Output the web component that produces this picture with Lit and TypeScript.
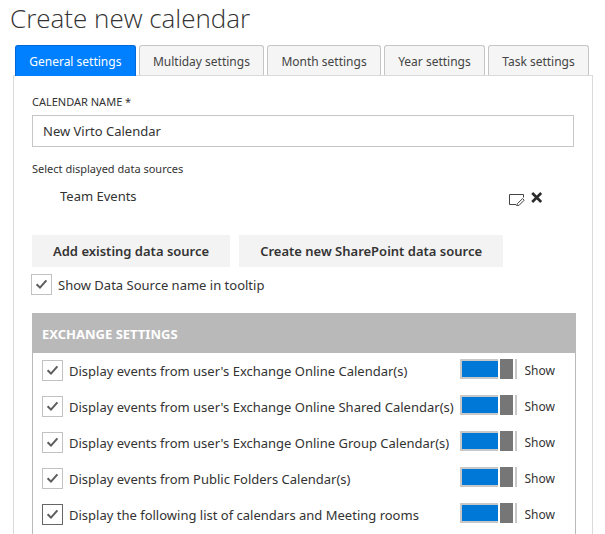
import { LitElement, html, css, svg } from "lit";
import { customElement, property, state } from "lit/decorators.js";
import { classMap } from "lit/directives/class-map.js";

@customElement("check-box")
class CheckBox extends LitElement {
  @property() label = "";
  @property({ type: Boolean }) checked = false;
  @property({ type: Boolean }) active = false;

  static styles = css`
    :host {
      display: block;
      min-width: 0;
    }
    label {
      display: flex;
      align-items: center;
      gap: 6px;
      white-space: nowrap;
    }
    .box {
      display: grid;
      flex: none;
    }
    .box > * {
      grid-area: 1 / 1;
    }
    input {
      appearance: none;
      box-sizing: border-box;
      width: 21px;
      height: 21px;
      margin: 0;
      border: 1px solid #c2c2c2;
      background: #fff;
    }
    .active {
      border-color: #666;
    }
    svg {
      pointer-events: none;
    }
  `;

  render() {
    return html`<label>
      <span class="box">
        <input
          type="checkbox"
          class=${classMap({ active: this.active })}
          .checked=${this.checked}
          @change=${(e: Event) => (this.checked = (e.target as HTMLInputElement).checked)}
        />
        ${this.checked
          ? html`<svg width="21" height="21" viewBox="0 0 21 21" aria-hidden="true">
              ${svg`<path d="M5.6 10.2 L9 13.6 L15.4 6.4" fill="none" stroke="#5c5c5c" stroke-width="2"/>`}
            </svg>`
          : null}
      </span>
      <span>${this.label}</span>
    </label>`;
  }
}

@customElement("toggle-switch")
class ToggleSwitch extends LitElement {
  static styles = css`
    label {
      display: flex;
      align-items: flex-start;
      gap: 8px;
      font-size: 12px;
      line-height: 20px;
    }
    input {
      appearance: none;
      position: relative;
      box-sizing: border-box;
      width: 57px;
      height: 20px;
      margin: 0;
      border: 2px solid #c8c8c8;
      background: #fff;
    }
    input:checked {
      background: #0078d7;
    }
    input::before {
      content: "";
      position: absolute;
      top: -2px;
      bottom: -2px;
      left: 0;
      width: 13px;
      background: #767676;
      box-shadow: -2px 0 #fff, 2px 0 #fff;
    }
    input:checked::before {
      left: auto;
      right: 2px;
    }
    span {
      padding-top: 2px;
    }
  `;

  render() {
    return html`<label><input type="checkbox" role="switch" checked /><span>Show</span></label>`;
  }
}

@customElement("app-root")
class AppRoot extends LitElement {
  @state() private tab = 0;

  private tabs = ["General settings", "Multiday settings", "Month settings", "Year settings", "Task settings"];

  private options = [
    "Display events from user's Exchange Online Calendar(s)",
    "Display events from user's Exchange Online Shared Calendar(s)",
    "Display events from user's Exchange Online Group Calendar(s)",
    "Display events from Public Folders Calendar(s)",
    "Display the following list of calendars and Meeting rooms",
  ];

  static styles = css`
    :host {
      display: flex;
      flex-direction: column;
      box-sizing: border-box;
      min-height: 100vh;
      padding: 0 12px 0 13px;
      background: #fff;
      color: #333;
      font: 13px/20px "Noto Sans", "Open Sans", sans-serif;
    }
    h1 {
      margin: 0 -3px 9px;
      font-family: "Open Sans", "Noto Sans", sans-serif;
      font-size: 26px;
      font-weight: 300;
      line-height: 36px;
      color: #333;
    }
    .tabs {
      display: flex;
      gap: 3px;
      padding: 0 4px 0 2px;
    }
    .tab {
      flex: auto;
      box-sizing: border-box;
      height: 30px;
      padding: 2px 0 0;
      border: 1px solid #c6c6c6;
      border-bottom: 0;
      border-radius: 3px 3px 0 0;
      background: #f5f5f5;
      color: #444;
      font: inherit;
      font-size: 12px;
      white-space: nowrap;
    }
    .selected {
      height: 31px;
      margin-bottom: -1px;
      z-index: 1;
      border-color: #0067d8;
      background: #007fff;
      color: #fff;
    }
    .panel {
      flex: 1;
      display: flex;
      flex-direction: column;
      padding: 16px 16px 0 18px;
      border: 1px solid #dadada;
      border-bottom: 0;
    }
    .caption {
      font-size: 11px;
    }
    .name {
      box-sizing: border-box;
      height: 32px;
      margin: 3px 2px 12px 0;
      padding: 0 10px;
      border: 1px solid #c6c6c6;
      background: #fff;
      color: #333;
      font: inherit;
    }
    .source {
      display: flex;
      align-items: center;
      justify-content: space-between;
      margin: 7px 33px 29px 28px;
    }
    .actions {
      display: flex;
      gap: 6px;
    }
    .icon {
      display: block;
      padding: 0;
      border: 0;
      background: none;
    }
    .icon svg {
      display: block;
    }
    .buttons {
      display: flex;
      gap: 9px;
      margin-bottom: 7px;
    }
    .button {
      height: 32px;
      padding: 0 21px;
      border: 0;
      background: #f3f3f3;
      color: #333;
      font: inherit;
      font-weight: 600;
      white-space: nowrap;
    }
    .tooltip {
      margin-left: -1px;
    }
    .exchange {
      flex: 1;
      margin-top: 18px;
      border: 1px solid #b9b9b9;
      border-width: 0 1px;
    }
    h2 {
      margin: 0 -1px;
      padding: 2px 10px 0;
      background: #b9b9b9;
      color: #fff;
      font-size: 13px;
      font-weight: 700;
      line-height: 38px;
    }
    .row {
      display: grid;
      grid-template-columns: 1fr auto;
      align-items: start;
      box-sizing: border-box;
      height: 36px;
      padding: 6px 20px 0 9px;
    }
    .row check-box {
      margin-top: 1px;
    }
  `;

  render() {
    return html`
      <h1>Create new calendar</h1>
      <div class="tabs" role="tablist">
        ${this.tabs.map(
          (t, i) => html`<button
            role="tab"
            aria-selected=${i === this.tab}
            class=${classMap({ tab: true, selected: i === this.tab })}
            @click=${() => (this.tab = i)}
          >${t}</button>`
        )}
      </div>
      <div class="panel">
        <label class="caption" for="name">CALENDAR NAME *</label>
        <input class="name" id="name" type="text" value="New Virto Calendar" />
        <div class="caption">Select displayed data sources</div>
        <div class="source">
          <span>Team Events</span>
          <div class="actions">
            <button class="icon" aria-label="Edit">
              <svg width="16" height="20" viewBox="0 0 16 20" fill="none" stroke="#444">
                <path d="M7 18.5H.5V8.5H14.5V11.5" />
                <path d="M7.6 20L8.4 17.6L13.6 12.6L15.2 14.2L10.2 19.2Z" />
              </svg>
            </button>
            <button class="icon" aria-label="Delete">
              <svg width="12" height="20" viewBox="0 0 12 20" stroke="#2b2b2b" stroke-width="2.6">
                <path d="M1.2 7L10.2 16M10.2 7L1.2 16" />
              </svg>
            </button>
          </div>
        </div>
        <div class="buttons">
          <button class="button">Add existing data source</button>
          <button class="button">Create new SharePoint data source</button>
        </div>
        <check-box class="tooltip" label="Show Data Source name in tooltip" checked></check-box>
        <section class="exchange">
          <h2>EXCHANGE SETTINGS</h2>
          ${this.options.map(
            (o, i) => html`<div class="row">
              <check-box .label=${o} checked ?active=${i === this.options.length - 1}></check-box>
              <toggle-switch></toggle-switch>
            </div>`
          )}
        </section>
      </div>
    `;
  }
}
